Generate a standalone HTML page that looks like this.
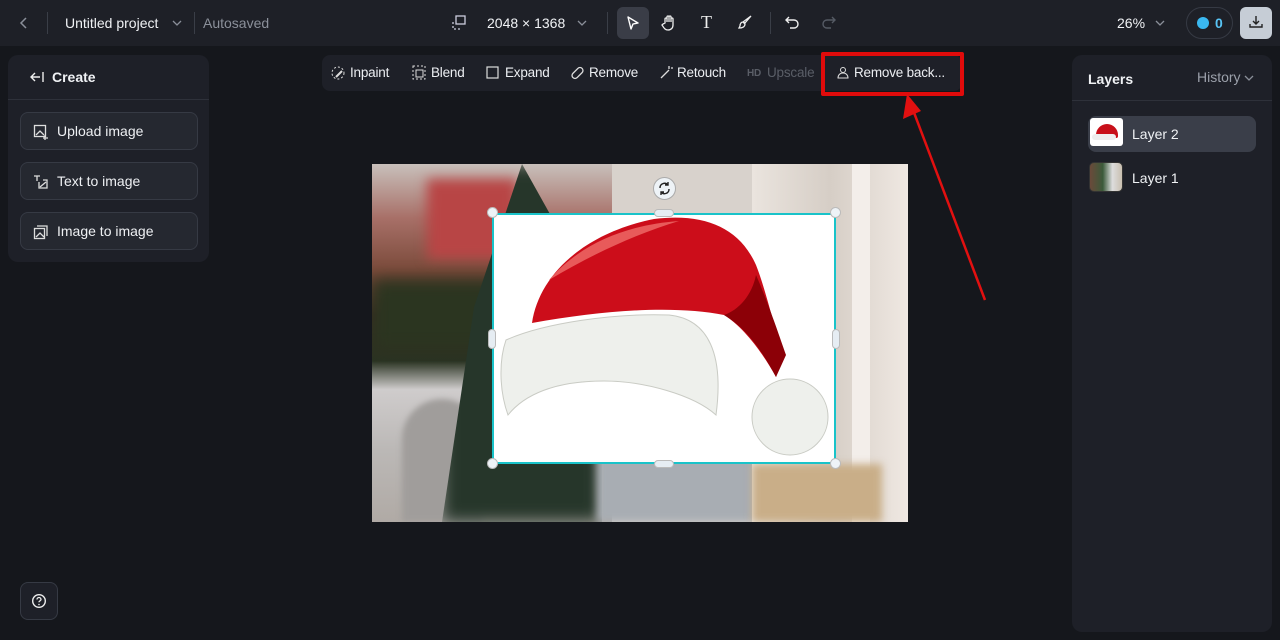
<!DOCTYPE html>
<html><head><meta charset="utf-8"><style>
*{box-sizing:border-box;margin:0;padding:0}
body{width:1280px;height:640px;background:#15171c;font-family:"Liberation Sans",sans-serif;color:#e8eaee;position:relative;overflow:hidden;font-size:14px}
.top{position:absolute;left:0;top:0;width:1280px;height:46px;background:#1e2027}
.abs{position:absolute}
.t{position:absolute;white-space:nowrap}
.panel{position:absolute;background:#1e2028;border-radius:10px}
.btn{position:absolute;left:20px;width:178px;height:38px;border:1px solid #363a44;border-radius:8px;background:#252830}
.btn span{position:absolute;left:36px;top:10px;font-size:14px;color:#eef0f3}
.btn svg{position:absolute;left:12px;top:11px}
.tb span{position:absolute;top:65px;font-size:13.5px;letter-spacing:-0.2px;color:#eceef2}
</style></head><body>
<div class="top"></div>
<svg class="abs" style="left:18px;top:15px" width="12" height="16"><path d="M8 3L3 8l5 5" stroke="#8a8f99" stroke-width="1.5" fill="none"/></svg>
<div class="abs" style="left:47px;top:12px;width:1px;height:22px;background:#3a3e47"></div>
<div class="t" style="left:65px;top:15px;font-size:14px;color:#f0f2f5">Untitled project</div>
<svg class="abs" style="left:171px;top:17px" width="12" height="12"><path d="M2 4l4 4 4-4" stroke="#8a8f99" stroke-width="1.3" fill="none"/></svg>
<div class="abs" style="left:194px;top:12px;width:1px;height:22px;background:#3a3e47"></div>
<div class="t" style="left:203px;top:15px;font-size:14px;color:#8b909a">Autosaved</div>
<svg class="abs" style="left:452px;top:15px" width="15" height="15"><rect x="4" y="1" width="9" height="8" stroke="#ccd" fill="none" stroke-width="1.3"/><path d="M1 7v7h7" stroke="#ccd" stroke-dasharray="2 2" fill="none" stroke-width="1.3"/></svg>
<div class="t" style="left:487px;top:15px;font-size:14px;color:#f0f2f5">2048 × 1368</div>
<svg class="abs" style="left:576px;top:17px" width="12" height="12"><path d="M2 4l4 4 4-4" stroke="#8a8f99" stroke-width="1.3" fill="none"/></svg>
<div class="abs" style="left:607px;top:12px;width:1px;height:22px;background:#3a3e47"></div>
<div class="abs" style="left:617px;top:7px;width:32px;height:32px;background:#3a3d47;border-radius:6px"></div>
<svg class="abs" style="left:625px;top:15px" width="16" height="16"><path d="M3 2l10 6-5 1-2 5z" stroke="#fff" stroke-width="1.4" fill="none" stroke-linejoin="round"/></svg>
<svg class="abs" style="left:661px;top:14px" width="16" height="17"><path d="M4 9V5a1 1 0 012 0v3V3a1 1 0 012 0v5V3a1 1 0 012 0v5V5a1 1 0 012 0v6c0 3-2 5-5 5s-4-2-6-5l1-1z" stroke="#eee" stroke-width="1.3" fill="none"/></svg>
<div class="t" style="left:701px;top:12px;font-size:18px;color:#eee;font-family:'Liberation Serif',serif">T</div>
<svg class="abs" style="left:737px;top:14px" width="16" height="16"><path d="M14 2L8 9l-2-1zM6 8c-2 0-3 2-3 4l-1 2c3 0 6-1 6-4z" stroke="#eee" stroke-width="1.3" fill="none"/></svg>
<div class="abs" style="left:770px;top:12px;width:1px;height:22px;background:#3a3e47"></div>
<svg class="abs" style="left:784px;top:14px" width="18" height="18"><path d="M5 3L2 6l3 3M2 6h8a4 4 0 010 8H6" stroke="#eee" stroke-width="1.4" fill="none"/></svg>
<svg class="abs" style="left:820px;top:14px" width="18" height="18"><path d="M12 3l3 3-3 3M15 6H7a4 4 0 000 8h4" stroke="#555a64" stroke-width="1.4" fill="none"/></svg>
<div class="t" style="left:1117px;top:15px;font-size:14px;color:#f0f2f5">26%</div>
<svg class="abs" style="left:1154px;top:17px" width="12" height="12"><path d="M2 4l4 4 4-4" stroke="#8a8f99" stroke-width="1.3" fill="none"/></svg>
<div class="abs" style="left:1186px;top:7px;width:47px;height:32px;border:1px solid #363a44;border-radius:16px"></div>
<div class="abs" style="left:1197px;top:17px;width:12px;height:12px;border-radius:50%;background:#3ab8f0"></div>
<div class="t" style="left:1215px;top:15px;font-size:14px;color:#58c4f5;font-weight:bold">0</div>
<div class="abs" style="left:1240px;top:7px;width:32px;height:32px;background:#c6cdd6;border-radius:6px"></div>
<svg class="abs" style="left:1248px;top:14px" width="16" height="16"><path d="M8 2v8M5 7l3 3 3-3M2 10v3h12v-3" stroke="#222" stroke-width="1.4" fill="none"/></svg>

<div class="panel" style="left:8px;top:55px;width:201px;height:207px"></div>
<div class="abs" style="left:8px;top:99px;width:201px;height:1px;background:#2e313a"></div>
<svg class="abs" style="left:29px;top:70px" width="16" height="14"><path d="M6 3L2 7l4 4M2 7h9M14 2v10" stroke="#eee" stroke-width="1.4" fill="none"/></svg>
<div class="t" style="left:52px;top:69px;font-size:14px;font-weight:bold;color:#f0f2f5">Create</div>
<div class="btn" style="top:112px"><svg width="16" height="16"><rect x="1.5" y="1.5" width="11" height="11" stroke="#ddd" fill="none" stroke-width="1.3"/><path d="M3 11l4-4 4 4M12 11v5M10 14h5" stroke="#ddd" stroke-width="1.3" fill="none"/></svg><span>Upload image</span></div>
<div class="btn" style="top:162px"><svg width="16" height="16"><path d="M1 2h6M4 2v5M6 8v6h8V6H10" stroke="#ddd" stroke-width="1.3" fill="none"/><path d="M7 13l6-5" stroke="#ddd" stroke-width="1.3"/></svg><span>Text to image</span></div>
<div class="btn" style="top:212px"><svg width="16" height="16"><rect x="1.5" y="4.5" width="10" height="10" stroke="#ddd" fill="none" stroke-width="1.3"/><path d="M4 2h10v10M3 13l4-4 4 4" stroke="#ddd" stroke-width="1.3" fill="none"/></svg><span>Image to image</span></div>
<div class="abs" style="left:20px;top:582px;width:38px;height:38px;border:1px solid #363a44;border-radius:8px;background:#1e2028"></div>
<svg class="abs" style="left:31px;top:593px" width="16" height="16"><circle cx="8" cy="8" r="6.3" stroke="#eee" fill="none" stroke-width="1.4"/><path d="M6 6.5a2 2 0 114 0c0 1.2-2 1.3-2 2.8" stroke="#eee" fill="none" stroke-width="1.3"/><circle cx="8" cy="11.5" r=".8" fill="#eee"/></svg>

<div class="panel" style="left:322px;top:55px;width:640px;height:36px;border-radius:8px"></div>
<div class="tb">
<svg class="abs" style="left:331px;top:66px" width="14" height="14"><circle cx="7" cy="7" r="6" stroke="#ddd" stroke-dasharray="2 2" fill="none"/><path d="M5 11l6-6" stroke="#ddd" stroke-width="2"/></svg><span style="left:350px">Inpaint</span>
<svg class="abs" style="left:412px;top:65px" width="14" height="15"><rect x="1" y="1" width="12" height="13" stroke="#ddd" stroke-dasharray="2 2" fill="none"/><rect x="4" y="5" width="7" height="7" stroke="#ddd" fill="none"/></svg><span style="left:431px">Blend</span>
<svg class="abs" style="left:486px;top:66px" width="13" height="13"><rect x="1" y="1" width="11" height="11" stroke="#ddd" fill="none" stroke-width="1.2"/></svg><span style="left:505px">Expand</span>
<svg class="abs" style="left:570px;top:65px" width="15" height="15"><rect x="1" y="5" width="13" height="6" rx="3" transform="rotate(-45 7.5 8)" stroke="#ddd" fill="none" stroke-width="1.3"/></svg><span style="left:589px">Remove</span>
<svg class="abs" style="left:659px;top:65px" width="14" height="15"><path d="M2 13l8-8M10 1v3M12 3h2" stroke="#ddd" stroke-width="1.3"/></svg><span style="left:677px">Retouch</span>
<span style="left:747px;font-size:10px;top:68px;color:#5a5e67;font-weight:bold">HD</span><span style="left:767px;color:#5a5e67">Upscale</span>
<svg class="abs" style="left:836px;top:65px" width="14" height="15"><circle cx="7" cy="5" r="2.5" stroke="#ddd" fill="none"/><path d="M2 13c0-3 2-5 5-5s5 2 5 5z" stroke="#ddd" fill="none"/></svg><span style="left:854px">Remove back...</span>
</div>
<div class="abs" style="left:821px;top:52px;width:143px;height:44px;border:4px solid #e00b0b;border-radius:2px"></div>
<svg class="abs" style="left:890px;top:90px" width="110" height="215"><path d="M95 210L20 12" stroke="#e21010" stroke-width="2.5"/><path d="M17 4l-4 25 18-8z" fill="#e21010"/></svg>

<div class="panel" style="left:1072px;top:55px;width:200px;height:577px"></div>
<div class="abs" style="left:1072px;top:100px;width:200px;height:1px;background:#2e313a"></div>
<div class="t" style="left:1088px;top:71px;font-weight:bold;color:#f0f2f5">Layers</div>
<div class="t" style="left:1197px;top:69px;color:#9ba0aa">History</div>
<svg class="abs" style="left:1243px;top:72px" width="12" height="12"><path d="M2 4l4 4 4-4" stroke="#8a8f99" stroke-width="1.3" fill="none"/></svg>
<div class="abs" style="left:1088px;top:116px;width:168px;height:36px;background:#3a3e49;border-radius:8px"></div>
<div class="abs" style="left:1090px;top:118px;width:33px;height:28px;background:#fff;border-radius:3px;overflow:hidden"><div style="position:absolute;left:6px;top:6px;width:22px;height:14px;background:#c8101a;border-radius:12px 12px 2px 2px"></div><div style="position:absolute;left:2px;top:16px;width:24px;height:6px;background:#eee;border-radius:3px"></div></div>
<div class="t" style="left:1132px;top:126px;color:#f0f2f5">Layer 2</div>
<div class="abs" style="left:1089px;top:162px;width:34px;height:30px;border-radius:5px;background:linear-gradient(90deg,#6a4a3a,#3b5a3a 40%,#ddd 70%,#c9bfb0);border:1px solid #333"></div>
<div class="t" style="left:1132px;top:170px;color:#f0f2f5">Layer 1</div>

<div class="abs" style="left:372px;top:164px;width:536px;height:358px;overflow:hidden;background:#d8d2cc">
<div class="abs" style="left:0;top:0;width:240px;height:358px;background:linear-gradient(180deg,#c8c0bb 0%,#a87068 15%,#7a4a3a 30%,#3a2a20 42%,#2a3322 55%,#cfcccc 63%,#bbb8b6 80%,#b0aaa5 100%)"></div>
<div class="abs" style="left:55px;top:15px;width:90px;height:80px;background:#b84545;filter:blur(6px)"></div>
<div class="abs" style="left:0;top:115px;width:170px;height:70px;background:#2b3520;filter:blur(8px)"></div>
<div class="abs" style="left:30px;top:235px;width:80px;height:123px;background:#a09d9b;border-radius:40px 40px 0 0;filter:blur(3px)"></div>
<div class="abs" style="left:70px;top:0;width:160px;height:358px;background:#26362a;filter:blur(8px);clip-path:polygon(50% 0,100% 40%,100% 100%,0 100%,20% 40%)"></div>
<div class="abs" style="left:225px;top:280px;width:160px;height:78px;background:#a8adb3;filter:blur(4px)"></div>
<div class="abs" style="left:380px;top:0;width:156px;height:358px;background:linear-gradient(90deg,#eae4de,#d6cec6 50%,#efe8e2)"></div>
<div class="abs" style="left:480px;top:0;width:18px;height:358px;background:#f3eeea"></div>
<div class="abs" style="left:380px;top:300px;width:130px;height:58px;background:#c9ae88;filter:blur(4px)"></div>
</div>

<div class="abs" style="left:492px;top:213px;width:344px;height:251px;background:#fff;border:2px solid #19c3c9"></div>
<svg class="abs" style="left:494px;top:215px" width="340" height="247" viewBox="0 0 340 247">
<path d="M38 108C45 60 90 18 160 4C210 -2 245 12 262 50C272 75 282 120 290 140L282 162C270 140 250 112 230 100C180 90 110 95 38 108Z" fill="#cc0d1a"/>
<path d="M230 100C255 115 270 140 282 162L292 140C285 120 275 90 262 60C258 80 245 95 230 100Z" fill="#8c0007"/>
<path d="M55 65C85 30 130 10 185 6C145 18 100 38 55 65Z" fill="#e85a5a"/>
<path d="M12 125C50 108 120 98 175 100C215 104 230 140 222 200C200 180 150 166 110 166C60 166 30 180 14 200C5 175 5 145 12 125Z" fill="#eef0ec" stroke="#c9cbc4"/>
<circle cx="296" cy="202" r="38" fill="#eef0ec" stroke="#c9cbc4"/>
</svg>
<div class="abs" style="left:487px;top:207px;width:11px;height:11px;border-radius:50%;background:#eef3f7;border:1px solid #bbb"></div>
<div class="abs" style="left:830px;top:207px;width:11px;height:11px;border-radius:50%;background:#eef3f7;border:1px solid #bbb"></div>
<div class="abs" style="left:487px;top:458px;width:11px;height:11px;border-radius:50%;background:#eef3f7;border:1px solid #bbb"></div>
<div class="abs" style="left:830px;top:458px;width:11px;height:11px;border-radius:50%;background:#eef3f7;border:1px solid #bbb"></div>
<div class="abs" style="left:654px;top:209px;width:20px;height:8px;border-radius:4px;background:#e6edf3;border:1px solid #bbb"></div>
<div class="abs" style="left:654px;top:460px;width:20px;height:8px;border-radius:4px;background:#e6edf3;border:1px solid #bbb"></div>
<div class="abs" style="left:488px;top:329px;width:8px;height:20px;border-radius:4px;background:#e6edf3;border:1px solid #bbb"></div>
<div class="abs" style="left:832px;top:329px;width:8px;height:20px;border-radius:4px;background:#e6edf3;border:1px solid #bbb"></div>
<div class="abs" style="left:653px;top:177px;width:23px;height:23px;border-radius:50%;background:#eef3f7;border:1px solid #aaa"></div>
<svg class="abs" style="left:657px;top:181px" width="15" height="15"><path d="M3 7a4.5 4.5 0 018-3M12 8a4.5 4.5 0 01-8 3M11 1v3H8M4 14v-3h3" stroke="#222" stroke-width="1.4" fill="none"/></svg>
</body></html>
